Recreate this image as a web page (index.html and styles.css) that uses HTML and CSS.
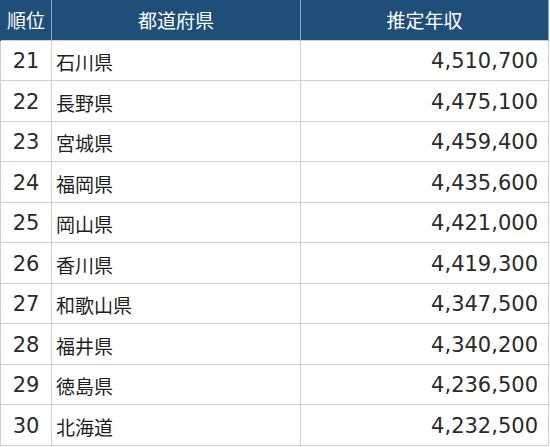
FILE: index.html
```html
<!DOCTYPE html>
<html lang="ja">
<head>
<meta charset="utf-8">
<link rel="stylesheet" href="styles.css">
</head>
<body>
<table class="rank">
  <colgroup><col class="c-rank"><col class="c-pref"><col class="c-val"></colgroup>
  <thead>
    <tr><th>順位</th><th>都道府県</th><th>推定年収</th></tr>
  </thead>
  <tbody>
    <tr><td class="n">21</td><td class="p">石川県</td><td class="v">4,510,700</td></tr>
    <tr><td class="n">22</td><td class="p">長野県</td><td class="v">4,475,100</td></tr>
    <tr><td class="n">23</td><td class="p">宮城県</td><td class="v">4,459,400</td></tr>
    <tr><td class="n">24</td><td class="p">福岡県</td><td class="v">4,435,600</td></tr>
    <tr><td class="n">25</td><td class="p">岡山県</td><td class="v">4,421,000</td></tr>
    <tr><td class="n">26</td><td class="p">香川県</td><td class="v">4,419,300</td></tr>
    <tr><td class="n">27</td><td class="p">和歌山県</td><td class="v">4,347,500</td></tr>
    <tr><td class="n">28</td><td class="p">福井県</td><td class="v">4,340,200</td></tr>
    <tr><td class="n">29</td><td class="p">徳島県</td><td class="v">4,236,500</td></tr>
    <tr><td class="n">30</td><td class="p">北海道</td><td class="v">4,232,500</td></tr>
  </tbody>
</table>
</body>
</html>
```
FILE: styles.css
```css
html, body {
  margin: 0;
  padding: 0;
  background: #ffffff;
}
.rank {
  border-collapse: collapse;
  table-layout: fixed;
  width: 548px;
  font-family: "Noto Sans CJK JP", sans-serif;
  color: #1e1e1e;
}
.c-rank { width: 51px; }
.c-pref { width: 249px; }
.c-val { width: 248px; }
.rank th {
  background: #1f4e79;
  color: #ffffff;
  font-weight: normal;
  font-size: 19px;
  height: 40px;
  padding: 0;
  border-left: 1px solid #8fa7c0;
  border-right: 1px solid #8fa7c0;
  text-align: center;
  line-height: 1;
  box-sizing: border-box;
}
.rank th:first-child { border-left: 1px solid #1f4e79; }
.rank td {
  height: 40.5px;
  padding: 0;
  border: 1px solid #cfcfcf;
  box-sizing: border-box;
  line-height: 1;
  vertical-align: middle;
  padding-top: 3px;
}
.rank td.n {
  font-family: "DejaVu Sans", sans-serif;
  font-size: 21px;
  text-align: center;
  color: #2a2a2a;
}
.rank td.p {
  font-size: 19px;
  padding-left: 4px;
}
.rank td.v {
  font-family: "DejaVu Sans", sans-serif;
  font-size: 21px;
  text-align: right;
  padding-right: 10px;
  color: #2a2a2a;
}
```
